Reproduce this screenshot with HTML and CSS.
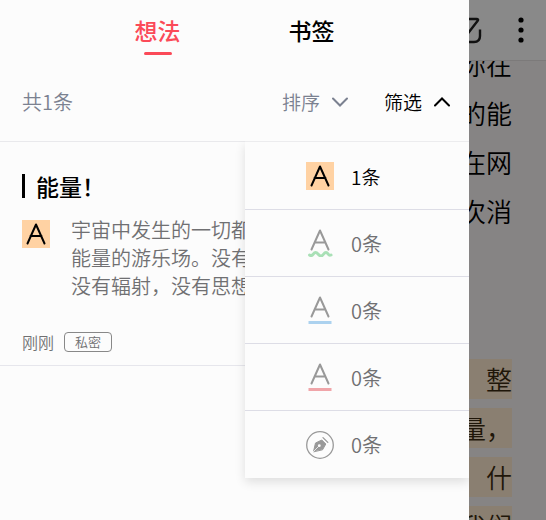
FILE: index.html
```html
<!DOCTYPE html>
<html lang="zh-CN">
<head>
<meta charset="utf-8">
<meta name="viewport" content="width=device-width, initial-scale=1">
<title>想法</title>
<link rel="stylesheet" href="styles.css">
</head>
<body>
<div class="screen">
  <main class="drawer">
    <nav class="tabs">
      <button class="tab tab-active" type="button">想法</button>
      <button class="tab" type="button">书签</button>
    </nav>
    <div class="toolbar">
      <span class="total">共1条</span>
      <button class="tool" type="button">排序
        <svg class="chevron" viewBox="0 0 16 10"><path d="M1 1.500 8 8.500l7-7"/></svg>
      </button>
      <button class="tool tool-open" type="button" aria-expanded="true">筛选
        <svg class="chevron" viewBox="0 0 16 10"><path d="M1 8.500 8 1.500l7 7"/></svg>
      </button>
      <div class="menu">
        <button class="option option-active" type="button">
          <svg class="mark" viewBox="0 0 28 28"><rect class="fill" width="28" height="28"/><path class="letter" d="M5.500 23.500 14 4.500l8.500 19M8.500 16h11"/></svg>
          <span>1条</span>
        </button>
        <button class="option" type="button">
          <svg class="mark" viewBox="0 0 28 28"><path class="letter" d="M5.500 20.500 14 1.500l8.500 19M8.500 13.500h11"/><path class="line green" d="M3.500 26C7 28.500 7 23.500 9.500 23.500S12.500 27 15 27 17.500 23.500 20 23.500 22 27.500 25 26"/></svg>
          <span>0条</span>
        </button>
        <button class="option" type="button">
          <svg class="mark" viewBox="0 0 28 28"><path class="letter" d="M5.500 20.500 14 1.500l8.500 19M8.500 13.500h11"/><path class="line blue" d="M2.500 26.500h23"/></svg>
          <span>0条</span>
        </button>
        <button class="option" type="button">
          <svg class="mark" viewBox="0 0 28 28"><path class="letter" d="M5.500 20.500 14 1.500l8.500 19M8.500 13.500h11"/><path class="line red" d="M2.500 26.500h23"/></svg>
          <span>0条</span>
        </button>
        <button class="option" type="button">
          <svg class="mark" viewBox="0 0 28 28"><circle class="ring" cx="14" cy="14" r="13.300"/><path class="nib" d="M7.500 20.500 9.500 12 15.800 9 19.800 13 16.700 18.500Z"/><path class="slit" d="M7.300 20.700 12.500 15.500"/><circle class="eye" cx="13.300" cy="14.700" r="1.400"/><path class="ring" d="M17 6.600 21.800 11.400"/></svg>
          <span>0条</span>
        </button>
      </div>
    </div>
    <article class="note">
      <h2 class="note-title">能量！</h2>
      <div class="note-body">
        <svg class="mark mark-active" viewBox="0 0 28 28"><rect class="fill" width="28" height="28"/><path class="letter" d="M5.500 23.500 14 4.500l8.500 19M8.500 16h11"/></svg>
        <p class="quote">宇宙中发生的一切都<br>能量的游乐场。没有<br>没有辐射，没有思想</p>
      </div>
      <footer class="note-meta"><span>刚刚</span><span class="badge">私密</span></footer>
    </article>
  </main>
  <aside class="reader">
    <header class="reader-bar">
      <svg class="listen" viewBox="0 0 28 28"><path d="M3 3H22.500Q25 3 23.500 5L12 20M26 13.500V20Q26 26 20 26H9"/></svg>
      <svg class="dots" viewBox="0 0 6 28"><circle cx="3" cy="4" r="2.600"/><circle cx="3" cy="14" r="2.600"/><circle cx="3" cy="24" r="2.600"/></svg>
    </header>
    <div class="page">
      <div class="passage">
        <p class="row">你在</p>
        <p class="row">的能</p>
        <p class="row">在网</p>
        <p class="row">次消</p>
      </div>
      <div class="passage marked">
        <p class="row"><mark>，　整</mark></p>
        <p class="row"><mark>能量，</mark></p>
        <p class="row"><mark>。　什</mark></p>
        <p class="row"><mark>，我们</mark></p>
      </div>
    </div>
  </aside>
</div>
</body>
</html>
```
FILE: styles.css
```css
* { box-sizing: border-box; }

body {
  margin: 0;
  font-family: "Noto Sans CJK SC", sans-serif;
  font-weight: 350;
  color: #000;
}

p, h2 { margin: 0; }

button {
  margin: 0;
  padding: 0;
  border: 0;
  background: none;
  font: inherit;
  color: inherit;
}

svg { display: block; flex: none; fill: none; }

.screen {
  display: flex;
  height: 100vh;
  overflow: hidden;
}

.drawer {
  flex: 1;
  min-width: 0;
  background: #fcfcfc;
}

.tabs {
  display: flex;
  justify-content: center;
  gap: 108px;
  height: 62px;
  padding-top: 12px;
}

.tab {
  display: flex;
  flex-direction: column;
  align-items: center;
  gap: 4px;
  font-size: 23px;
  line-height: 36px;
  height: 43px;
  font-weight: 500;
}

.tab-active { color: #fb4a58; }

.tab-active::after {
  content: "";
  width: 28px;
  height: 3px;
  border-radius: 2px;
  background: currentColor;
}

.toolbar {
  position: relative;
  display: flex;
  align-items: center;
  gap: 36px;
  height: 80px;
  padding: 0 19px 0 22px;
  border-bottom: 1px solid #e9e9ec;
}

.total {
  flex: 1;
  font-size: 20px;
  color: #7b8190;
}

.tool {
  display: flex;
  align-items: center;
  gap: 12px;
  font-size: 19px;
  color: #7b8190;
}

.tool-open { color: #000; }

.chevron {
  width: 16px;
  height: 10px;
  stroke: currentColor;
  stroke-width: 2;
  stroke-linecap: round;
}

.menu {
  position: absolute;
  top: 100%;
  right: 0;
  width: 224px;
  padding-top: 1px;
  border-top: 1px solid #ececee;
  background: #fcfcfc;
  box-shadow: 0 4px 10px rgba(0, 0, 0, 0.12);
  clip-path: inset(0 0 -20px -12px);
}

.option {
  display: flex;
  align-items: center;
  gap: 17px;
  width: 100%;
  height: 67px;
  padding-left: 61px;
  border-bottom: 1px solid #dddde6;
  font-size: 20px;
  color: #707072;
}

.option:last-child { border-bottom: 0; }

.option-active { color: #000; font-size: 19px; }

.mark {
  width: 28px;
  height: 28px;
  stroke-linecap: round;
  stroke-linejoin: round;
}

.fill { fill: #ffd2a3; }
.letter { stroke: #999; stroke-width: 2; }
.option-active .letter, .mark-active .letter { stroke: #000; }
.line { stroke-width: 3; stroke-linecap: butt; }
.green { stroke: #a9e0b6; stroke-linecap: round; }
.blue { stroke: #acd2ef; }
.red { stroke: #f0a5a9; }
.ring { stroke: #999; stroke-width: 1.3; }
.nib { fill: #999; stroke: #999; }
.slit { stroke: #fcfcfc; stroke-width: 0.8; }
.eye { fill: #fcfcfc; }

.note {
  padding: 28px 22px 12px;
  border-bottom: 1px solid #e6e6ec;
}

.note-title {
  display: flex;
  align-items: center;
  gap: 11px;
  font-size: 23px;
  line-height: 32px;
  font-weight: 500;
}

.note-title::before {
  content: "";
  width: 3px;
  height: 24px;
  background: #000;
}

.note-body {
  display: flex;
  gap: 21px;
  margin-top: 14px;
}

.note-body .mark { margin-top: 4px; }

.quote {
  font-size: 20px;
  line-height: 28px;
  color: #707072;
  white-space: nowrap;
}

.note-meta {
  display: flex;
  align-items: center;
  gap: 10px;
  margin-top: 31px;
  font-size: 16px;
  line-height: 22px;
  color: #707072;
}

.badge {
  padding: 0 10px;
  border: 1px solid #888;
  border-radius: 4px;
  font-size: 13px;
  line-height: 18px;
}

.reader {
  display: flex;
  flex-direction: column;
  width: 77px;
  background: #868484;
  overflow: hidden;
}

.reader-bar {
  display: flex;
  flex: none;
  align-items: center;
  justify-content: flex-end;
  gap: 36px;
  height: 61px;
  padding-right: 22px;
  border-bottom: 1px solid #7c7a7a;
  background: #898989;
}

.listen {
  width: 28px;
  height: 28px;
  stroke: #111;
  stroke-width: 2.4;
  stroke-linejoin: round;
}

.dots { width: 6px; height: 28px; fill: #000; }

.page {
  display: flex;
  flex: 1;
  min-height: 0;
  flex-direction: column;
  justify-content: flex-start;
  gap: 124px;
  padding-right: 34px;
  overflow: hidden;
}

.passage { flex: none; }

.passage:first-child { margin-top: -22px; }

.row {
  display: flex;
  justify-content: flex-end;
  font-size: 26px;
  line-height: 49px;
  white-space: nowrap;
}

.row mark {
  margin-bottom: 9px;
  line-height: 40px;
  background: #8a7f71;
  color: #1f1609;
}
```
